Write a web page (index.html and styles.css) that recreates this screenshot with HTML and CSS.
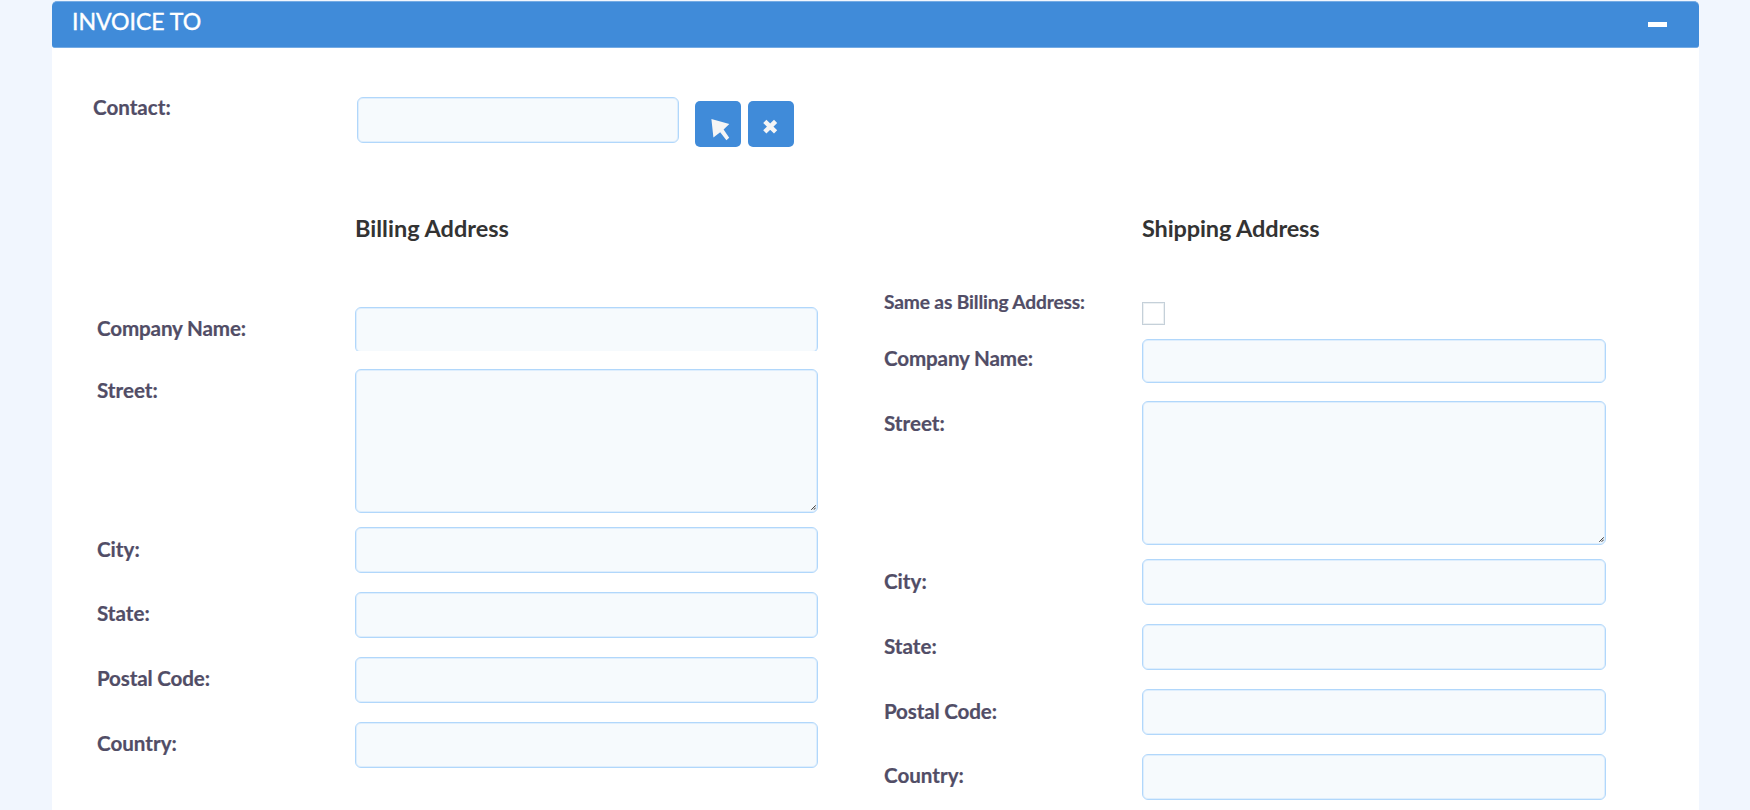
FILE: index.html
```html
<!DOCTYPE html>
<html lang="en">
<head>
<meta charset="utf-8">
<title>Invoice To</title>
<link rel="stylesheet" href="styles.css">
</head>
<body>
<section class="panel">
  <header class="panel-header">
    <h2 class="panel-title">INVOICE TO</h2>
    <button class="collapse" aria-label="Collapse"></button>
  </header>
  <div class="contact-row">
    <label class="label contact-label" for="contact">Contact:</label>
    <input class="field contact-field" id="contact">
    <div class="actions">
      <button class="action" aria-label="Select"><svg width="46" height="46" viewBox="0 0 46 46"><path d="M16.4 18.1 34.3 23 28.6 28.6 34.2 36.8 31.4 39.2 25.2 31.2 18.4 36.5Z" fill="#f5f5f5"/></svg></button>
      <button class="action" aria-label="Clear"><svg width="46" height="46" viewBox="0 0 46 46"><path d="M16.8 20.4 27.6 30.8M27.6 20.4 16.8 30.8" stroke="#f5f5f5" stroke-width="4.6"/></svg></button>
    </div>
  </div>
  <div class="addresses">
    <div class="column">
      <h3 class="heading">Billing Address</h3>
      <div class="row billing-company"><label class="label long">Company Name:</label><div class="clip"><input class="field"></div></div>
      <div class="row street"><label class="label">Street:</label><div class="area"><textarea class="field"></textarea><svg class="grip" width="5" height="5" viewBox="0 0 5 5"><path d="M.3 4.8 4.8.3M2.6 4.8 4.8 2.6" stroke="#333"/></svg></div></div>
      <div class="row city low"><label class="label">City:</label><input class="field"></div>
      <div class="row"><label class="label">State:</label><input class="field"></div>
      <div class="row"><label class="label long">Postal Code:</label><input class="field"></div>
      <div class="row"><label class="label">Country:</label><input class="field"></div>
    </div>
    <div class="column">
      <h3 class="heading shipping-heading">Shipping Address</h3>
      <div class="row same"><label class="label long same-label" for="same">Same as Billing Address:</label><input type="checkbox" class="checkbox" id="same"></div>
      <div class="row shipping-company"><label class="label long">Company Name:</label><input class="field"></div>
      <div class="row street low"><label class="label">Street:</label><div class="area"><textarea class="field"></textarea><svg class="grip" width="5" height="5" viewBox="0 0 5 5"><path d="M.3 4.8 4.8.3M2.6 4.8 4.8 2.6" stroke="#333"/></svg></div></div>
      <div class="row city low"><label class="label">City:</label><input class="field"></div>
      <div class="row low"><label class="label">State:</label><input class="field"></div>
      <div class="row low"><label class="label long">Postal Code:</label><input class="field"></div>
      <div class="row"><label class="label">Country:</label><input class="field"></div>
    </div>
  </div>
</section>
</body>
</html>
```
FILE: styles.css
```css
* { box-sizing: border-box; }

body {
  margin: 0;
  height: 810px;
  overflow: hidden;
  background: #f1f6fe;
  font-family: Lato, sans-serif;
}

.panel {
  width: 1647px;
  height: 809px;
  margin: 1px 0 0 52px;
  background: #fff;
  border-radius: 5px 5px 0 0;
}

.panel-header {
  display: flex;
  justify-content: space-between;
  height: 47px;
  padding: 0 32px 0 20px;
  background: #408bd9;
  border: 1px solid #75abe4;
  border-width: 1px 0;
  border-radius: 5px 5px 3px 3px;
}

.panel-title {
  margin: 5px 0 0;
  color: #fff;
  font-size: 23.1px;
  font-weight: 400;
  line-height: 29px;
  letter-spacing: -0.05px;
  -webkit-text-stroke: 0.4px #fff;
}

.collapse {
  width: 19px;
  height: 5px;
  margin-top: 20px;
  padding: 0;
  border: 0;
  background: #fff;
}

.contact-row {
  display: flex;
  height: 165px;
  padding: 49px 0 0 41px;
}

.label {
  color: #514d66;
  font-size: 20.6px;
  font-weight: 700;
  line-height: 26px;
  white-space: nowrap;
  padding-top: 8px;
  -webkit-text-stroke: 0.2px #514d66;
}

.long { letter-spacing: -0.15px; }

.contact-label {
  width: 264px;
  padding-top: 0;
  margin-top: -3px;
}

.field {
  display: block;
  width: 100%;
  height: 46px;
  margin: 0;
  border: 1px solid #b1d7fb;
  border-radius: 6px;
  background: #f6fafd;
  box-shadow: inset 0 0 0 1px #deeefd;
  outline: none;
  resize: none;
}

.contact-field { width: 322px; }

.actions {
  display: flex;
  gap: 7px;
  margin: 4px 0 0 16px;
}

.action {
  width: 46px;
  height: 46px;
  padding: 0;
  border: 0;
  border-radius: 5px;
  background: #408bd9;
}

.action svg { display: block; }

.addresses {
  display: flex;
  gap: 66px;
  padding-left: 45px;
}

.column { width: 721px; }

.column:last-child { width: 722px; }

.heading {
  height: 30px;
  margin: 0 0 0 258px;
  color: #333;
  font-size: 23.5px;
  font-weight: 700;
  line-height: 30px;
}

.shipping-heading { letter-spacing: -0.13px; }

.row {
  display: grid;
  grid-template-columns: 258px 1fr;
  align-items: start;
  margin-top: 19px;
}

.billing-company { margin-top: 64px; }

.clip {
  height: 44px;
  overflow: hidden;
}

.area { position: relative; }
.area .field { height: 144px; }

.grip {
  position: absolute;
  right: 2px;
  bottom: 3px;
}

.street { margin-top: 18px; }
.city { margin-top: 14px; }
.low .label { padding-top: 9px; }

.same {
  height: 37px;
  margin-top: 45px;
}

.same .same-label {
  padding-top: 1px;
  font-size: 19.2px;
}

.checkbox {
  appearance: none;
  width: 23px;
  height: 23px;
  margin: 14px 0 0;
  border: 1px solid #c5d0d9;
  box-shadow: inset 0 0 0 1px #edf1f3;
}

.shipping-company { margin-top: 14px; }
.shipping-company .field { height: 44px; }
.shipping-company .label { padding-top: 6px; }
```
